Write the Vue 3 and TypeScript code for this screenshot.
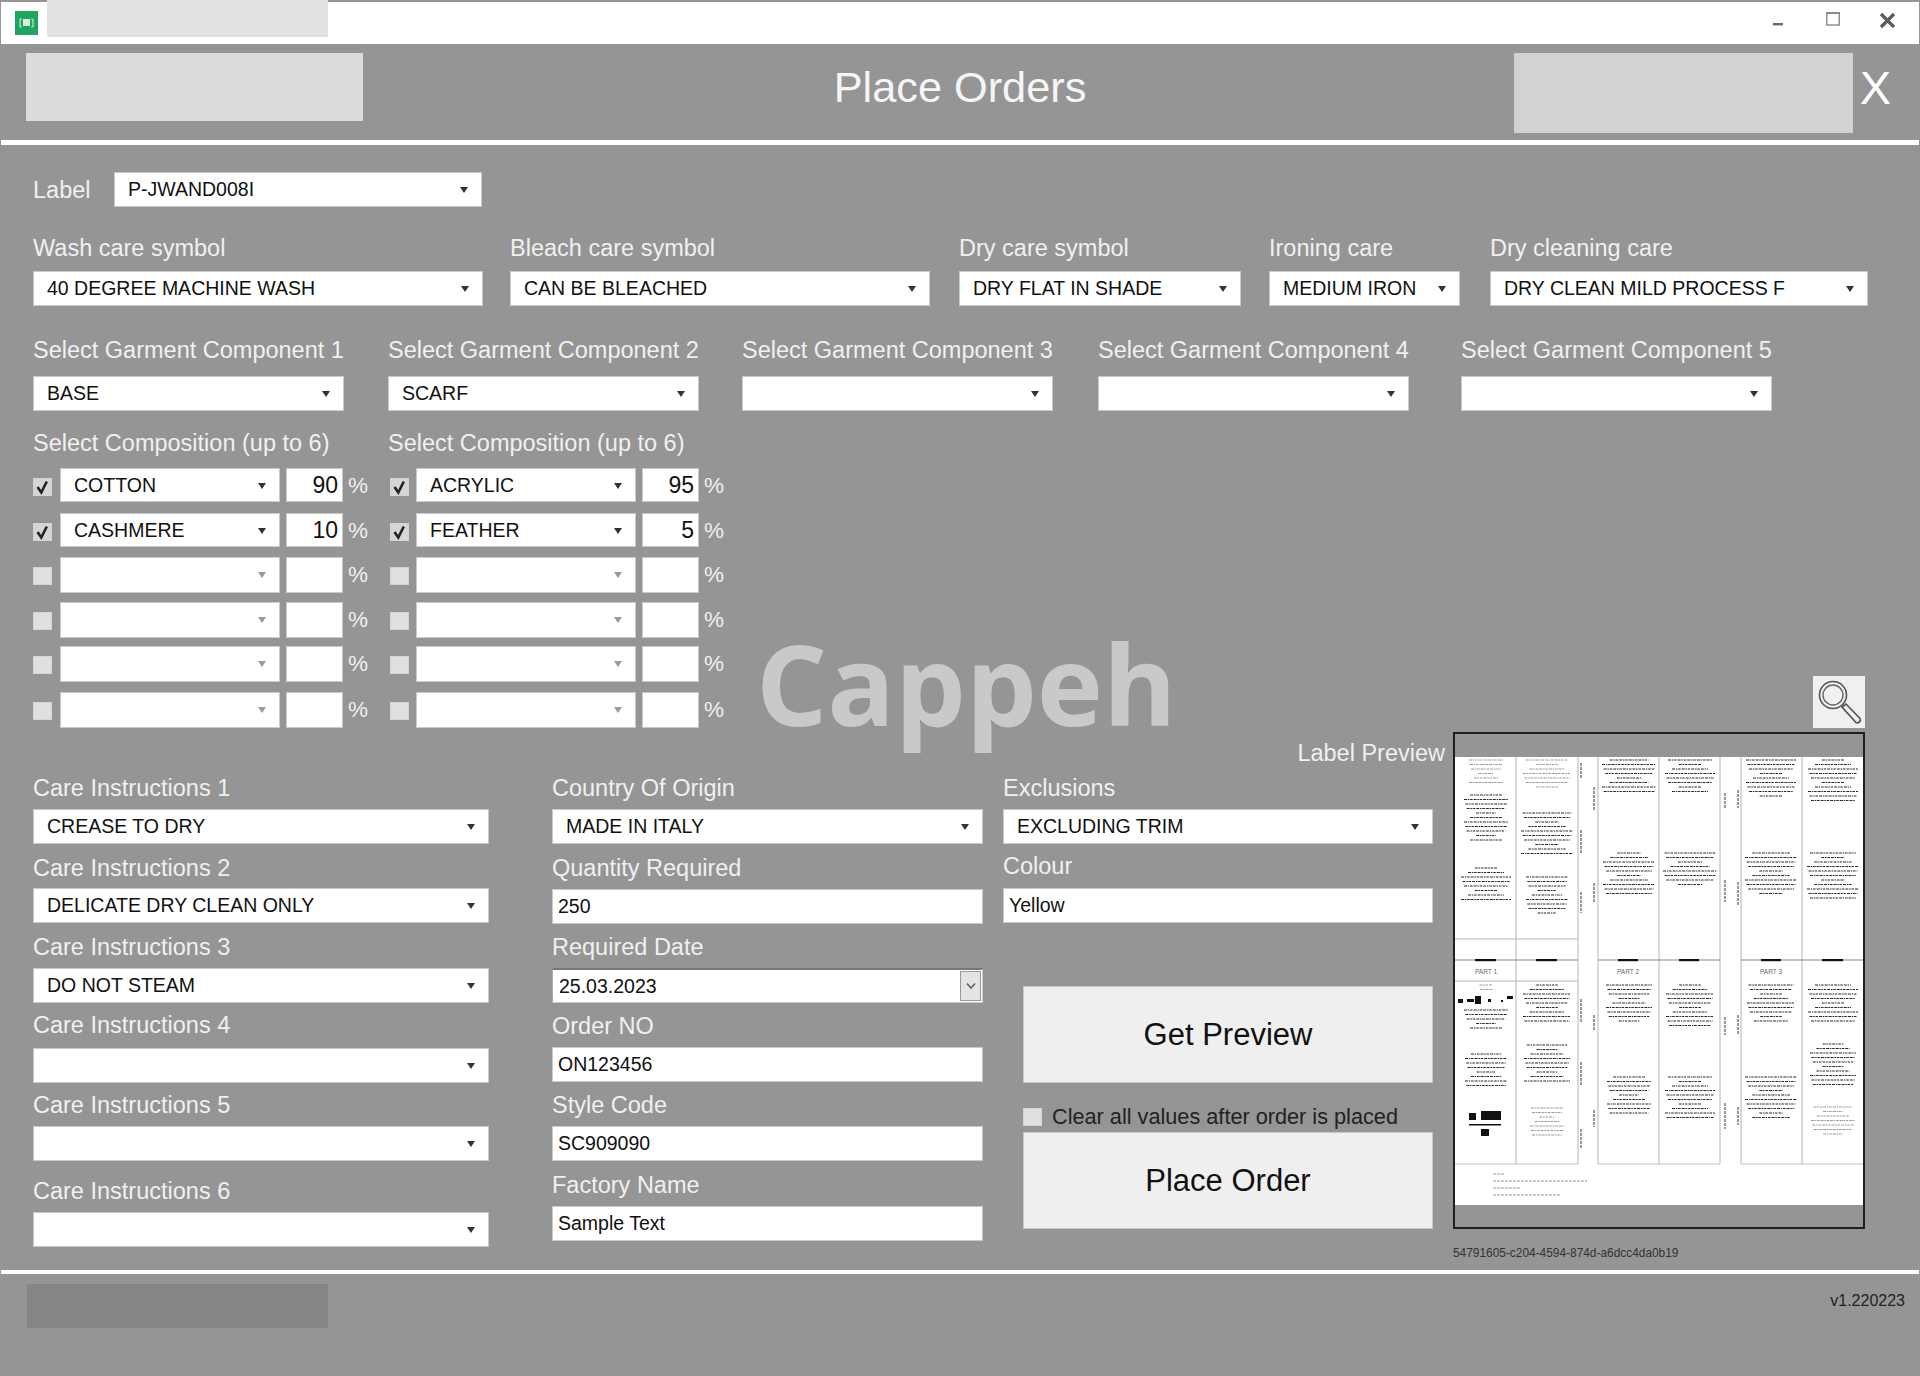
<script setup lang="ts">
interface CompRow { name: string; pct: string; on: boolean }
interface Field { label: string; value: string }

const careTop: Field[] = [
  { label: 'Wash care symbol', value: '40 DEGREE MACHINE WASH' },
  { label: 'Bleach care symbol', value: 'CAN BE BLEACHED' },
  { label: 'Dry care symbol', value: 'DRY FLAT IN SHADE' },
  { label: 'Ironing care', value: 'MEDIUM IRON' },
  { label: 'Dry cleaning care', value: 'DRY CLEAN MILD PROCESS F' },
]
const garments: Field[] = [
  { label: 'Select Garment Component 1', value: 'BASE' },
  { label: 'Select Garment Component 2', value: 'SCARF' },
  { label: 'Select Garment Component 3', value: '' },
  { label: 'Select Garment Component 4', value: '' },
  { label: 'Select Garment Component 5', value: '' },
]
const emptyRows: CompRow[] = [0, 1, 2, 3].map(() => ({ name: '', pct: '', on: false }))
const comps: CompRow[][] = [
  [{ name: 'COTTON', pct: '90', on: true }, { name: 'CASHMERE', pct: '10', on: true }, ...emptyRows],
  [{ name: 'ACRYLIC', pct: '95', on: true }, { name: 'FEATHER', pct: '5', on: true }, ...emptyRows],
]
const care: Field[] = [
  { label: 'Care Instructions 1', value: 'CREASE TO DRY' },
  { label: 'Care Instructions 2', value: 'DELICATE DRY CLEAN ONLY' },
  { label: 'Care Instructions 3', value: 'DO NOT STEAM' },
  { label: 'Care Instructions 4', value: '' },
  { label: 'Care Instructions 5', value: '' },
  { label: 'Care Instructions 6', value: '' },
]
const orderFields: Field[] = [
  { label: 'Order NO', value: 'ON123456' },
  { label: 'Style Code', value: 'SC909090' },
  { label: 'Factory Name', value: 'Sample Text' },
]

/* The reference preview is a tiny, illegible thumbnail: modelled as rows of dashes. */
interface Dash { x1: number; x2: number; y: number; faint: boolean }
const OX = 1455
const OY = 734
const blocks: [number, number, number, number, boolean][] = [
  [1486, 760, 6, 34, true], [1486, 795, 11, 44, false], [1486, 868, 8, 50, false],
  [1547, 760, 7, 48, true], [1547, 813, 10, 52, false], [1547, 877, 9, 42, false],
  [1629, 760, 8, 54, false], [1629, 853, 10, 52, false],
  [1690, 760, 8, 50, false], [1690, 853, 8, 54, false],
  [1771, 760, 9, 50, false], [1771, 853, 10, 52, false],
  [1833, 760, 10, 50, false], [1833, 853, 11, 52, false],
  [1486, 985, 2, 14, true], [1486, 1010, 5, 44, false], [1486, 1054, 8, 42, false],
  [1547, 985, 9, 48, false], [1547, 1045, 9, 46, false], [1547, 1108, 7, 34, true],
  [1629, 985, 9, 46, false], [1629, 1077, 9, 44, false],
  [1690, 985, 10, 48, false], [1690, 1077, 10, 50, false],
  [1771, 985, 9, 48, false], [1771, 1077, 10, 52, false],
  [1833, 985, 9, 50, false], [1833, 1044, 10, 46, false], [1833, 1107, 7, 44, true],
]
const dashes: Dash[] = []
blocks.forEach(([cx, y, n, w, faint], b) => {
  for (let i = 0; i < n; i++) {
    const k = (i * 7 + b * 3) % 5
    const lw = w * (k === 1 ? 0.45 : k === 3 ? 0.72 : 1 - k * 0.03)
    dashes.push({ x1: cx - OX - lw / 2, x2: cx - OX + lw / 2, y: y - OY + i * 4.5, faint })
  }
})
const vertical: [number, number, number][] = [
  [1581, 763, 779], [1581, 830, 853], [1581, 892, 913], [1594, 787, 810], [1594, 883, 903],
  [1725, 793, 808], [1725, 880, 902], [1738, 790, 808], [1738, 882, 906],
  [1581, 999, 1023], [1581, 1062, 1085], [1581, 1129, 1148], [1594, 1015, 1031], [1594, 1110, 1127],
  [1725, 1017, 1035], [1725, 1103, 1129], [1738, 1015, 1034], [1738, 1107, 1125],
]
const folds: number[] = [61, 123, 143, 204, 265, 286, 347]
const cuts: [number, number][] = [[20, 41], [81, 102], [163, 183], [224, 244], [306, 326], [367, 388]]
const parts: [string, number][] = [['PART 1', 20], ['PART 2', 162], ['PART 3', 305]]
const metaLines: [number, number][] = [[38, 12], [38, 94], [38, 27], [38, 68]]
</script>

<template>
  <div class="window">
    <div class="titlebar">
      <svg class="app-icon" width="23" height="24" viewBox="0 0 23 24">
        <rect width="23" height="24" fill="#1fa55f" />
        <path d="M5 8h2M16 8h2M5 16h2M16 16h2M5 8v8M18 8v8" stroke="#bfe6cf" stroke-width="1.2" fill="none" />
        <rect x="8" y="8" width="7" height="7" fill="#d6eede" />
      </svg>
      <div class="blur blur-title"></div>
      <div class="win-controls">
        <svg width="10" height="14" viewBox="0 0 10 14"><rect y="11" width="10" height="2.4" fill="#6a6a6a" /></svg>
        <svg width="14" height="14" viewBox="0 0 14 14"><rect x=".75" y="1" width="12.5" height="12" fill="none" stroke="#8a8a8a" stroke-width="1.4" /><rect x="0" y="0" width="14" height="2" fill="#8a8a8a" /></svg>
        <svg width="17" height="17" viewBox="0 0 17 17"><path d="M2 2l13 13M15 2L2 15" stroke="#5c5c5c" stroke-width="3.2" /></svg>
      </div>
    </div>

    <header class="head">
      <div class="blur blur-left"></div>
      <div class="title">Place Orders</div>
      <div class="head-right">
        <div class="blur blur-right"></div>
        <div class="close-x">X</div>
      </div>
    </header>
    <div class="rule rule-top"></div>

    <main class="main">
      <div class="label-row">
        <span class="lbl label-name">Label</span>
        <div class="ctl select label-select">P-JWAND008I</div>
      </div>

      <div class="care-grid">
        <div v-for="f in careTop" :key="f.label">
          <div class="lbl">{{ f.label }}</div>
          <div class="ctl select">{{ f.value }}</div>
        </div>
      </div>

      <div class="garment-grid">
        <div v-for="f in garments" :key="f.label">
          <div class="lbl">{{ f.label }}</div>
          <div class="ctl select">{{ f.value }}</div>
        </div>
      </div>

      <div class="mid">
        <div class="mid-left">
          <div class="comp-wrap">
            <div v-for="(col, c) in comps" :key="c" class="comp-col">
              <div class="lbl">Select Composition (up to 6)</div>
              <div class="comp-rows">
                <div v-for="(r, i) in col" :key="i" class="comp-row" :class="{ off: !r.on }">
                  <span class="chk" :class="{ on: r.on }">
                    <svg v-if="r.on" width="19" height="18" viewBox="0 0 19 18"><path d="M4.500 9l3.800 5.500L13.800 3.500" fill="none" stroke="#222" stroke-width="2.600" /></svg>
                  </span>
                  <div class="ctl select comp-select">{{ r.name }}</div>
                  <div class="ctl comp-num">{{ r.pct }}</div>
                  <span class="pct">%</span>
                </div>
              </div>
            </div>
          </div>

          <div class="brand">Cappeh</div>

          <div class="lower">
            <div class="care-col">
              <div v-for="f in care" :key="f.label">
                <div class="lbl">{{ f.label }}</div>
                <div class="ctl select wide-select">{{ f.value }}</div>
              </div>
            </div>

            <div class="order-col">
              <div>
                <div class="lbl">Country Of Origin</div>
                <div class="ctl select wide-select">MADE IN ITALY</div>
              </div>
              <div>
                <div class="lbl">Quantity Required</div>
                <div class="ctl input">250</div>
              </div>
              <div>
                <div class="lbl">Required Date</div>
                <div class="ctl input date">
                  25.03.2023
                  <span class="date-btn">
                    <svg width="12" height="8" viewBox="0 0 12 8"><path d="M2 1.5l4 4.5 4-4.500" fill="none" stroke="#666" stroke-width="1.6" /></svg>
                  </span>
                </div>
              </div>
              <div v-for="f in orderFields" :key="f.label">
                <div class="lbl">{{ f.label }}</div>
                <div class="ctl input">{{ f.value }}</div>
              </div>
            </div>

            <div class="action-col">
              <div class="lbl">Exclusions</div>
              <div class="ctl select wide-select">EXCLUDING TRIM</div>
              <div class="lbl colour-lbl">Colour</div>
              <div class="ctl input">Yellow</div>
              <div class="actions">
                <div class="btn">Get Preview</div>
                <div class="clear-row">
                  <span class="chk"></span>
                  <span>Clear all values after order is placed</span>
                </div>
                <div class="btn">Place Order</div>
              </div>
            </div>
          </div>
        </div>

        <aside class="preview-col">
          <div class="zoom-btn">
            <svg width="52" height="52" viewBox="0 0 52 52">
              <circle cx="20" cy="19" r="13.5" fill="none" stroke="#555" stroke-width="1.6" />
              <circle cx="20" cy="19" r="10" fill="none" stroke="#666" stroke-width="1.4" />
              <path d="M29 31l4-3 14 14.500a3 3 0 0 1-4 4z" fill="#f0f0f0" stroke="#555" stroke-width="1.6" />
            </svg>
          </div>
          <div class="preview">
            <span class="preview-cap">Label Preview</span>
            <svg class="sheet" width="408" height="493" viewBox="0 0 408 493">
              <rect width="408" height="493" fill="#959595" />
              <rect y="23" width="409" height="448" fill="#fff" />
              <line v-for="x in folds" :key="x" :x1="x" :x2="x" y1="23" y2="430" stroke="#b4b4b4" stroke-width="1" />
              <path d="M0 205H123M0 247H123" stroke="#b4b4b4" stroke-width="1" />
              <line x1="0" x2="123" y1="226" y2="226" stroke="#888" stroke-width="1" />
              <line x1="143" x2="265" y1="226" y2="226" stroke="#888" stroke-width="1" />
              <line x1="286" x2="408" y1="226" y2="226" stroke="#888" stroke-width="1" />
              <path d="M0 430H123M143 430H265M286 430H408" stroke="#c4c4c4" stroke-width="1" />
              <rect v-for="c in cuts" :key="c[0]" :x="c[0]" y="225" :width="c[1] - c[0]" height="2.200" fill="#111" />
              <text v-for="p in parts" :key="p[0]" :x="p[1]" y="240" class="part">{{ p[0] }}</text>
              <g class="soft">
                <line
                  v-for="(d, i) in dashes"
                  :key="'d' + i"
                  :x1="d.x1" :x2="d.x2" :y1="d.y" :y2="d.y"
                  :stroke="d.faint ? '#999' : '#2a2a2a'"
                  :stroke-width="d.faint ? 1 : 1.200"
                  stroke-dasharray="3 .8 1.500 .8 2.500 1"
                />
                <line
                  v-for="(v, i) in vertical"
                  :key="'v' + i"
                  :x1="v[0] - OX" :x2="v[0] - OX" :y1="v[1] - OY" :y2="v[2] - OY"
                  stroke="#555" stroke-width="1.200" stroke-dasharray="3 1"
                />
                <g fill="#111">
                  <rect x="3" y="265" width="5" height="4" />
                  <rect x="12" y="265" width="7" height="3" />
                  <rect x="20" y="262" width="6" height="8" />
                  <rect x="33" y="265" width="3" height="3" />
                  <rect x="46" y="266" width="2" height="2" />
                  <rect x="52" y="262" width="6" height="3" />
                  <rect x="14" y="379" width="7" height="7" />
                  <rect x="26" y="377" width="20" height="9" />
                  <rect x="14" y="390" width="32" height="1.500" />
                  <rect x="26" y="395" width="8" height="7" />
                </g>
                <line
                  v-for="(m, i) in metaLines"
                  :key="'m' + i"
                  :x1="m[0]" :x2="m[0] + m[1]" :y1="440 + i * 7" :y2="440 + i * 7"
                  stroke="#999" stroke-width="1.200" stroke-dasharray="3 1"
                />
              </g>
            </svg>
          </div>
          <div class="guid">54791605-c204-4594-874d-a6dcc4da0b19</div>
        </aside>
      </div>
    </main>

    <div class="rule"></div>
    <footer class="foot">
      <div class="blur blur-foot"></div>
      <div class="version">v1.220223</div>
    </footer>
  </div>
</template>

<style>
html, body { margin: 0; background: #959595; }
</style>

<style scoped>
.window {
  width: 1920px;
  height: 1376px;
  display: flex;
  flex-direction: column;
  background: #959595;
  font-family: "Liberation Sans", Arial, sans-serif;
  overflow: hidden;
  box-sizing: border-box;
}
.titlebar {
  height: 44px;
  flex: none;
  box-sizing: border-box;
  background: #fff;
  border: solid #959595;
  border-width: 2px 1px 0;
  display: flex;
  align-items: center;
}
.app-icon { margin: 0 0 0 14px; flex: none; }
.blur-title {
  width: 281px;
  height: 37px;
  margin: -2px 0 0 9px;
  align-self: flex-start;
  background: #e2e2e2;
}
.win-controls {
  margin-left: auto;
  padding-right: 23px;
  display: flex;
  align-items: flex-start;
  padding-bottom: 6px;
}
.win-controls svg:nth-child(2) { margin: 0 39px 0 43px; }

.head {
  height: 96px;
  flex: none;
  display: grid;
  grid-template-columns: 1fr auto 1fr;
  align-items: start;
}
.blur-left {
  width: 337px;
  height: 68px;
  margin: 9px 0 0 26px;
  background: #dcdcdc;
}
.title {
  margin-top: 18px;
  font-size: 43.300px;
  line-height: 50px;
  color: #f5f5f5;
}
.head-right {
  display: flex;
  justify-content: flex-end;
  padding-right: 29px;
}
.blur-right {
  width: 339px;
  height: 80px;
  margin: 9px 7px 0 0;
  background: #d2d2d2;
}
.close-x {
  margin-top: 19px;
  font-size: 47px;
  line-height: 50px;
  color: #fff;
}
.rule { height: 4px; flex: none; margin: 0 1px; background: #fff; }
.rule-top { height: 5px; }

.main {
  height: 1125px;
  flex: none;
  box-sizing: border-box;
  padding: 27px 0 0 33px;
}
.lbl {
  font-size: 23.500px;
  line-height: 26px;
  color: #f0f0f0;
  white-space: nowrap;
}
.ctl {
  height: 35px;
  box-sizing: border-box;
  background: #fff;
  border: 1px solid #c9c9c9;
  color: #111;
  font-size: 19.500px;
  line-height: 33px;
  white-space: nowrap;
  overflow: hidden;
}
.select { position: relative; padding-left: 13px; }
.select::after {
  content: "";
  position: absolute;
  right: 13px;
  top: 14px;
  border: solid transparent;
  border-width: 6px 4.500px 0;
  border-top-color: #333;
}
.input { padding-left: 5px; }

.label-row { display: flex; align-items: center; }
.label-name { width: 81px; }
.label-select { width: 368px; }

.care-grid, .garment-grid { display: grid; }
.care-grid {
  margin-top: 28px;
  grid-template-columns: 477px 449px 310px 221px 378px;
}
.care-grid > div { padding-right: 28px; }
.care-grid > div:nth-child(1) { padding-right: 27px; }
.care-grid > div:nth-child(2) { padding-right: 29px; }
.care-grid > div:nth-child(4) { padding-right: 30px; }
.care-grid > div:nth-child(5) { padding-right: 0; }
.care-grid .lbl { margin-bottom: 10px; }

.garment-grid {
  margin-top: 31px;
  grid-template-columns: 355px 354px 356px 363px 311px;
}
.garment-grid .lbl { margin-bottom: 13px; }
.garment-grid .ctl { width: 311px; height: 35px; }

.mid { position: relative; display: flex; margin-top: 19px; }
.mid-left { width: 1400px; margin-right: 20px; flex: none; position: relative; }

.comp-wrap { display: flex; }
.comp-col { width: 355px; }
.comp-col .lbl { margin-bottom: 12px; }
.comp-rows {
  display: grid;
  grid-template-rows: 45px 44px 45px 44px 46px 35px;
}
.comp-row { display: flex; align-items: flex-start; }
.chk {
  width: 19px;
  height: 18px;
  flex: none;
  background: #e0e0e0;
  box-shadow: inset 0 0 0 1px #d4d4d4;
  display: block;
}
.chk.on { background: #d6d6d6; }
.chk svg { display: block; }
.comp-row > .chk { margin: 10px 8px 0 0; }
.comp-col:nth-child(2) .comp-row > .chk { margin-left: 2px; margin-right: 7px; }
.comp-select { width: 220px; height: 34px; line-height: 32px; }
.comp-num {
  width: 57px;
  height: 34px;
  margin-left: 6px;
  box-sizing: border-box;
  text-align: right;
  padding-right: 4px;
  font-size: 23px;
  line-height: 32px;
}
.comp-row.off .comp-select, .comp-row.off .comp-num { height: 36px; }
.comp-row.off .comp-select::after { border-top-color: #999; }
.pct {
  margin: 5px 0 0 5px;
  font-size: 22.500px;
  line-height: 26px;
  color: #f0f0f0;
}

.brand {
  position: absolute;
  left: 723px;
  top: 183px;
  font-family: "Open Sans", sans-serif;
  font-weight: 700;
  font-size: 112px;
  line-height: 140px;
  color: #c9c9c9;
}

.lower { display: flex; margin-top: 48px; }
.lower .lbl { margin-bottom: 8px; }
.care-col {
  width: 456px;
  margin-right: 63px;
  display: grid;
  grid-template-rows: 79px 80px 80px 78px 86px auto;
}
.care-col > div:nth-child(2) .lbl { margin: 1px 0 7px; }
.care-col > div:nth-child(4) .lbl { margin: -2px 0 10px; }
.order-col {
  width: 431px;
  margin-right: 20px;
  display: grid;
  grid-template-rows: 80px 79px 79px 79px 80px auto;
}
.action-col { width: 430px; }
.lower .colour-lbl { margin: 9px 0 9px; }
.date {
  position: relative;
  padding-left: 6px;
  border-top: 2px solid #777;
  border-left-color: #aaa;
  line-height: 32px;
}
.date-btn {
  position: absolute;
  right: 1px;
  top: 1px;
  bottom: 1px;
  width: 21px;
  box-sizing: border-box;
  background: #e4e4e4;
  border: 1px solid #999;
  display: flex;
  align-items: center;
  justify-content: center;
}
.actions { margin: 63px 0 0 20px; }
.btn {
  height: 97px;
  box-sizing: border-box;
  background: #efefef;
  border: 1px solid #c8c8c8;
  color: #111;
  font-size: 31px;
  line-height: 95px;
  text-align: center;
}
.clear-row {
  display: flex;
  align-items: center;
  height: 18px;
  margin: 25px 0 6px;
  color: #222;
  font-size: 21.700px;
  white-space: nowrap;
}
.clear-row .chk { margin-right: 10px; }

.preview-col { width: 412px; flex: none; margin-top: 246px; }
.zoom-btn {
  width: 52px;
  height: 52px;
  margin: 0 0 4px auto;
  background: #f0f0f0;
}
.zoom-btn svg { display: block; }
.preview {
  position: relative;
  width: 412px;
  height: 497px;
  box-sizing: border-box;
  border: 2px solid #1f1f1f;
}
.sheet { display: block; }
.soft { filter: blur(0.35px); }
.preview-cap {
  position: absolute;
  right: 100%;
  top: 6px;
  margin-right: 10px;
  font-size: 23.500px;
  line-height: 26px;
  color: #f0f0f0;
  white-space: nowrap;
}
.part {
  font-family: "Liberation Sans", sans-serif;
  font-size: 6.500px;
  fill: #666;
}
.guid {
  margin-top: 16px;
  font-size: 11.900px;
  line-height: 16px;
  color: #333;
  white-space: nowrap;
}

.foot {
  flex: none;
  height: 102px;
  display: flex;
  justify-content: space-between;
  padding: 10px 15px 0 27px;
  box-sizing: border-box;
}
.blur-foot { width: 301px; height: 44px; background: #868686; }
.version {
  margin-top: 7px;
  font-size: 16px;
  line-height: 20px;
  color: #222;
}
</style>
